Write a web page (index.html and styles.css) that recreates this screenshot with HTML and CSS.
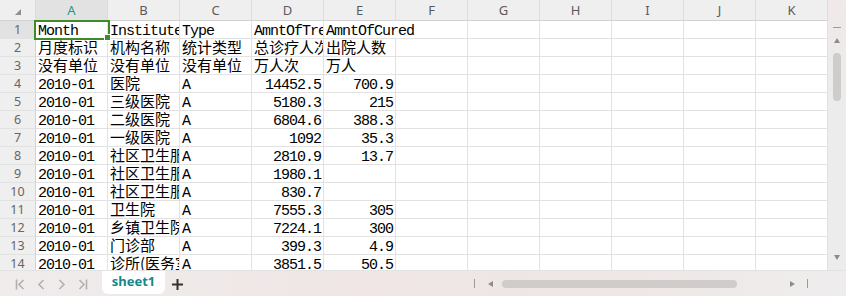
FILE: index.html
```html
<!DOCTYPE html>
<html lang="zh-CN">
<head>
  <meta charset="UTF-8">
  <meta name="viewport" content="width=device-width, initial-scale=1.0">
  <title>sheet1</title>
  <link rel="stylesheet" href="styles.css">
</head>
<body>
  <div class="app">
    <div class="main">
      <div class="sheet">
        <table class="grid">
          <colgroup>
            <col class="col-rh">
            <col><col><col><col><col><col><col><col><col><col><col>
          </colgroup>
          <thead>
            <tr>
              <th class="corner"><span class="tri"></span></th>
              <th class="on">A</th><th>B</th><th>C</th><th>D</th><th>E</th><th>F</th>
              <th>G</th><th>H</th><th>I</th><th>J</th><th>K</th>
            </tr>
          </thead>
          <tbody>
            <tr><th class="on">1</th><td class="sel">Month</td><td>Institute</td><td>Type</td><td>AmntOfTreatment</td><td colspan="2" class="spill">AmntOfCured</td><td></td><td></td><td></td><td></td><td></td></tr>
            <tr><th>2</th><td class="zh">月度标识</td><td class="zh">机构名称</td><td class="zh">统计类型</td><td class="zh">总诊疗人次</td><td class="zh">出院人数</td><td></td><td></td><td></td><td></td><td></td><td></td></tr>
            <tr><th>3</th><td class="zh">没有单位</td><td class="zh">没有单位</td><td class="zh">没有单位</td><td class="zh">万人次</td><td class="zh">万人</td><td></td><td></td><td></td><td></td><td></td><td></td></tr>
            <tr><th>4</th><td>2010-01</td><td class="zh">医院</td><td>A</td><td class="num">14452.5</td><td class="num">700.9</td><td></td><td></td><td></td><td></td><td></td><td></td></tr>
            <tr><th>5</th><td>2010-01</td><td class="zh">三级医院</td><td>A</td><td class="num">5180.3</td><td class="num">215</td><td></td><td></td><td></td><td></td><td></td><td></td></tr>
            <tr><th>6</th><td>2010-01</td><td class="zh">二级医院</td><td>A</td><td class="num">6804.6</td><td class="num">388.3</td><td></td><td></td><td></td><td></td><td></td><td></td></tr>
            <tr><th>7</th><td>2010-01</td><td class="zh">一级医院</td><td>A</td><td class="num">1092</td><td class="num">35.3</td><td></td><td></td><td></td><td></td><td></td><td></td></tr>
            <tr><th>8</th><td>2010-01</td><td class="zh">社区卫生服务中心</td><td>A</td><td class="num">2810.9</td><td class="num">13.7</td><td></td><td></td><td></td><td></td><td></td><td></td></tr>
            <tr><th>9</th><td>2010-01</td><td class="zh">社区卫生服务中心</td><td>A</td><td class="num">1980.1</td><td></td><td></td><td></td><td></td><td></td><td></td><td></td></tr>
            <tr><th>10</th><td>2010-01</td><td class="zh">社区卫生服务站</td><td>A</td><td class="num">830.7</td><td></td><td></td><td></td><td></td><td></td><td></td><td></td></tr>
            <tr><th>11</th><td>2010-01</td><td class="zh">卫生院</td><td>A</td><td class="num">7555.3</td><td class="num">305</td><td></td><td></td><td></td><td></td><td></td><td></td></tr>
            <tr><th>12</th><td>2010-01</td><td class="zh">乡镇卫生院</td><td>A</td><td class="num">7224.1</td><td class="num">300</td><td></td><td></td><td></td><td></td><td></td><td></td></tr>
            <tr><th>13</th><td>2010-01</td><td class="zh">门诊部</td><td>A</td><td class="num">399.3</td><td class="num">4.9</td><td></td><td></td><td></td><td></td><td></td><td></td></tr>
            <tr><th>14</th><td>2010-01</td><td class="zh">诊所(医务室)</td><td>A</td><td class="num">3851.5</td><td class="num">50.5</td><td></td><td></td><td></td><td></td><td></td><td></td></tr>
          </tbody>
        </table>
      </div>
      <div class="vscroll">
        <span class="vs-dash"></span>
        <svg class="vs-arrow" width="6" height="5" viewBox="0 0 6 5"><path d="M3 0 L6 5 L0 5 Z" fill="#8c8c8c"/></svg>
        <span class="vs-thumb"></span>
        <span class="vs-fill"></span>
        <svg class="vs-arrow" width="6" height="5" viewBox="0 0 6 5"><path d="M0 0 L6 0 L3 5 Z" fill="#8c8c8c"/></svg>
      </div>
    </div>

    <div class="tabbar">
      <div class="nav">
        <svg width="10" height="11" viewBox="0 0 10 11"><path d="M1.5 0.5 V10.5 M8.5 1 L4 5.5 L8.5 10" fill="none" stroke="#b0b0b0" stroke-width="1.6"/></svg>
        <svg width="10" height="11" viewBox="0 0 10 11"><path d="M7.5 1 L3 5.5 L7.5 10" fill="none" stroke="#b0b0b0" stroke-width="1.6"/></svg>
        <svg width="10" height="11" viewBox="0 0 10 11"><path d="M2.5 1 L7 5.5 L2.5 10" fill="none" stroke="#b0b0b0" stroke-width="1.6"/></svg>
        <svg width="10" height="11" viewBox="0 0 10 11"><path d="M1.5 1 L6 5.5 L1.5 10 M8.5 0.5 V10.5" fill="none" stroke="#b0b0b0" stroke-width="1.6"/></svg>
      </div>
      <div class="tab">sheet1</div>
      <svg class="add" width="11" height="11" viewBox="0 0 11 11"><path d="M5.5 0 V11 M0 5.5 H11" fill="none" stroke="#333" stroke-width="2"/></svg>
      <div class="hscroll">
        <span class="hs-bar"></span>
        <svg width="5" height="6" viewBox="0 0 5 6"><path d="M5 0 L5 6 L0 3 Z" fill="#8c8c8c"/></svg>
        <span class="hs-thumb"></span>
        <svg width="5" height="6" viewBox="0 0 5 6"><path d="M0 0 L0 6 L5 3 Z" fill="#8c8c8c"/></svg>
        <span class="hs-bar"></span>
      </div>
    </div>
  </div>
</body>
</html>
```

FILE: styles.css
```css
/* Page */
body {
  margin: 0;
  padding: 0;
  background: #fff;
}

.app {
  width: 846px;
  height: 296px;
  display: flex;
  flex-direction: column;
  overflow: hidden;
}

.main {
  display: flex;
  height: 270px;
}

/* Sheet grid */
.sheet {
  width: 828px;
  height: 270px;
  overflow: hidden;
  background: #fff;
}

.grid {
  table-layout: fixed;
  border-collapse: separate;
  border-spacing: 0;
  width: 828px;
}

.grid col {
  width: 72px;
}

.grid col.col-rh {
  width: 36px;
}

.grid th {
  box-sizing: border-box;
  padding: 0;
  background: #efefef;
  color: #5a5a5a;
  font-family: "Noto Sans", "Liberation Sans", sans-serif;
  font-weight: normal;
  font-size: 13px;
  text-align: center;
  border-right: 1px solid #dcdcdc;
  border-bottom: 1px solid #dcdcdc;
}

.grid thead th {
  height: 21px;
  line-height: 20px;
  border-bottom-color: #d2d2d2;
}

.grid tbody th {
  height: 18px;
  line-height: 17px;
  font-size: 12.5px;
  color: #666;
  border-right-color: #d2d2d2;
  border-bottom-color: #e2e2e2;
}

.grid th.on {
  background: #e2e2e2;
}

.grid thead th.on {
  color: #1c9a8c;
}

.grid th.corner {
  position: relative;
}

.tri {
  position: absolute;
  right: 14px;
  bottom: 5px;
  width: 0;
  height: 0;
  border-left: 6px solid transparent;
  border-bottom: 6px solid #8f8f8f;
}

.grid td {
  box-sizing: border-box;
  height: 18px;
  padding: 4px 2px 0 2px;
  vertical-align: top;
  line-height: 13px;
  white-space: nowrap;
  overflow: hidden;
  color: #000;
  font-family: "Liberation Mono", "Noto Sans CJK SC", monospace;
  font-size: 15px;
  letter-spacing: -1px;
  border-right: 1px solid #e2e2e2;
  border-bottom: 1px solid #e2e2e2;
}

.grid td.zh {
  padding-top: 1px;
  font-family: "Noto Sans CJK SC", sans-serif;
  letter-spacing: 0;
}

.grid td.num {
  text-align: right;
  padding-right: 2px;
}

.grid td.spill {
  overflow: visible;
}

/* Active cell A1 */
.grid td.sel {
  position: relative;
  overflow: visible;
}

.grid td.sel::after {
  content: "";
  position: absolute;
  left: -2px;
  top: -1px;
  right: -3px;
  bottom: -2px;
  border: 2px solid #3f8a2b;
  z-index: 2;
}

.grid td.sel::before {
  content: "";
  position: absolute;
  right: -4px;
  bottom: -3px;
  width: 5px;
  height: 5px;
  background: #3f8a2b;
  border: 1px solid #fff;
  z-index: 3;
}

/* Vertical scrollbar */
.vscroll {
  width: 18px;
  height: 270px;
  background: linear-gradient(180deg, #efe9e8, #ececec 40%, #ececec);
  display: flex;
  flex-direction: column;
  align-items: center;
  padding-top: 27px;
  box-sizing: border-box;
}

.vs-dash {
  width: 8px;
  height: 1px;
  background: #9a9a9a;
}

.vs-arrow {
  margin-top: 10px;
}

.vs-thumb {
  margin-top: 10px;
  width: 8px;
  height: 48px;
  border-radius: 4px;
  background: #cfcccc;
}

.vs-fill {
  flex: 1;
}

.vscroll .vs-arrow:last-child {
  margin: 0 0 10px 0;
}

/* Sheet tabs */
.tabbar {
  height: 26px;
  display: flex;
  align-items: flex-start;
  background: linear-gradient(90deg, #efecec, #efe6e5 45%, #eee7e6 75%, #eeeded);
  border-top: 1px solid #e2e2e2;
  box-sizing: border-box;
}

.nav {
  width: 102px;
  display: flex;
  align-items: center;
  gap: 11px;
  padding: 8px 0 0 15px;
  box-sizing: border-box;
}

.tab {
  width: 63px;
  height: 23px;
  background: #fff;
  border-radius: 0 0 6px 6px;
  text-align: center;
  font-family: "Noto Sans", "Liberation Sans", sans-serif;
  font-weight: bold;
  font-size: 13px;
  line-height: 21px;
  color: #17878a;
}

.add {
  margin: 8px 0 0 7px;
}

.hscroll {
  margin-left: auto;
  width: 354px;
  display: flex;
  align-items: center;
  gap: 0;
  padding-top: 8px;
  box-sizing: border-box;
  margin-right: 18px;
}

.hs-bar {
  width: 1px;
  height: 9px;
  background: #9a9a9a;
}

.hscroll svg:first-of-type {
  margin: 0 9px 0 13px;
}

.hscroll svg:last-of-type {
  margin: 0 12px 0 53px;
}

.hs-thumb {
  width: 235px;
  height: 8px;
  border-radius: 4px;
  background: #d0cccc;
}
```
